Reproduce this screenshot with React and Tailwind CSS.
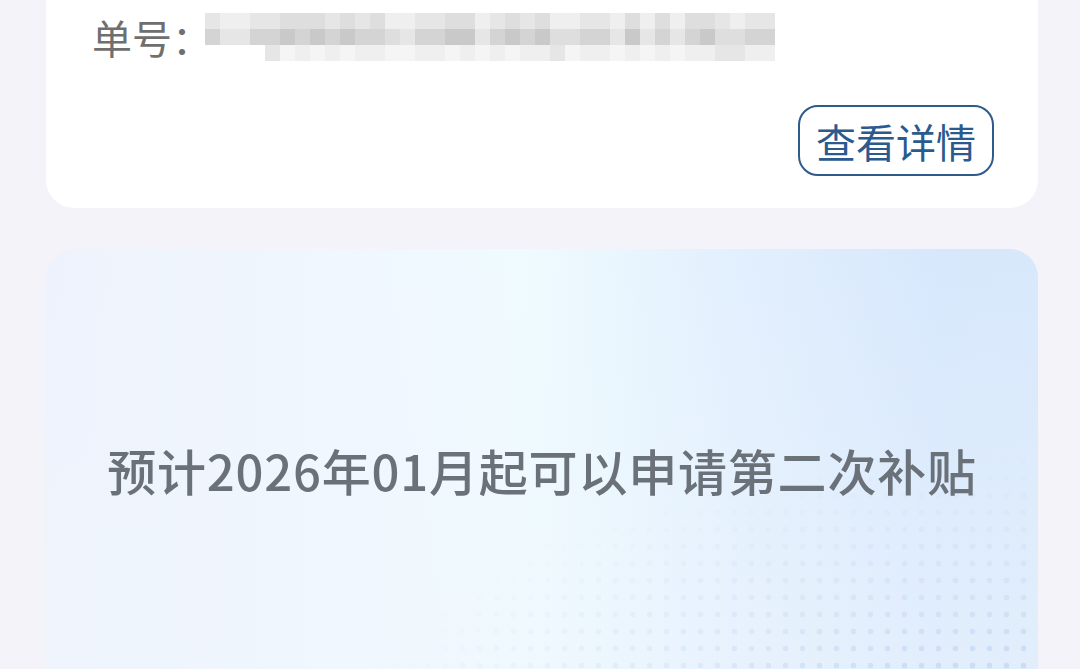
import React from "react";

const shades = [
  "bg-[#efefef]",
  "bg-[#e6e6e6]",
  "bg-[#dedede]",
  "bg-[#d4d4d4]",
  "bg-[#c9c9c9]",
  "bg-[#f5f5f5]",
];

// pseudo random shade per block, so the mosaic stays the same each render
const pick = (row, col) => {
  const n = (row * 73 + col * 37 + ((col * col) % 11) * 5) % 17;
  if (row === 0) return n < 6 ? shades[1] : n < 12 ? shades[0] : shades[2];
  if (row === 1) return n < 4 ? shades[4] : n < 9 ? shades[3] : n < 13 ? shades[2] : shades[1];
  return n < 7 ? shades[5] : n < 13 ? shades[0] : shades[1];
};

const Mosaic = () => {
  const cols = 38;
  return (
    <div className="flex flex-col blur-[0.6px]">
      {[0, 1, 2].map((row) => (
        <div key={row} className="flex">
          {Array.from({ length: cols }).map((_, col) => (
            <div
              key={col}
              className={`h-4 w-[15px] ${
                row === 2 && col < 4 ? "bg-white" : pick(row, col)
              }`}
            />
          ))}
        </div>
      ))}
    </div>
  );
};

const App = () => {
  return (
    <div
      className="h-[669px] overflow-hidden bg-[#f4f3f9] pl-[46px] pr-[42px]"
      style={{ fontFamily: '"Noto Sans CJK SC", "Noto Sans", sans-serif' }}
    >
      {/* order card */}
      <div className="rounded-b-[28px] bg-white pb-8 pl-[46px] pr-[44px] pt-3">
        <div className="flex items-center">
          <span className="text-[40px] leading-[50px] text-[#6f6f6f]">单号：</span>
          <div className="-ml-[7px]">
            <Mosaic />
          </div>
        </div>
        <div className="mt-[43px] flex justify-end">
          <button className="flex h-[71px] w-[196px] items-center justify-center rounded-[20px] border-2 border-[#2e5b89] text-[40px] leading-none text-[#2a5a8e]">
            查看详情
          </button>
        </div>
      </div>

      {/* subsidy notice */}
      <div className="relative mt-[41px] h-[500px] overflow-hidden rounded-[28px] bg-[linear-gradient(90deg,#eef2fc_0%,#f0f7fe_30%,#effbfe_48%,#e2effd_70%,#d7e8fc_90%,#d8e8fb_100%)]">
        <div className="absolute inset-0 bg-[linear-gradient(180deg,rgba(255,255,255,0)_0%,rgba(240,246,253,0.5)_100%)]" />
        <div className="absolute inset-0 bg-[radial-gradient(circle,#b6cfee_2.6px,transparent_3.2px)] bg-[length:17px_17px] opacity-80 [mask-image:radial-gradient(ellipse_70%_60%_at_100%_100%,black_0%,rgba(0,0,0,0.35)_55%,transparent_100%)]" />
        <p className="relative pt-[193px] text-center text-[49px] font-medium leading-[56px] tracking-[0.8px] text-[#6b7179]">
          预计2026年01月起可以申请第二次补贴
        </p>
      </div>
    </div>
  );
};

export default App;
